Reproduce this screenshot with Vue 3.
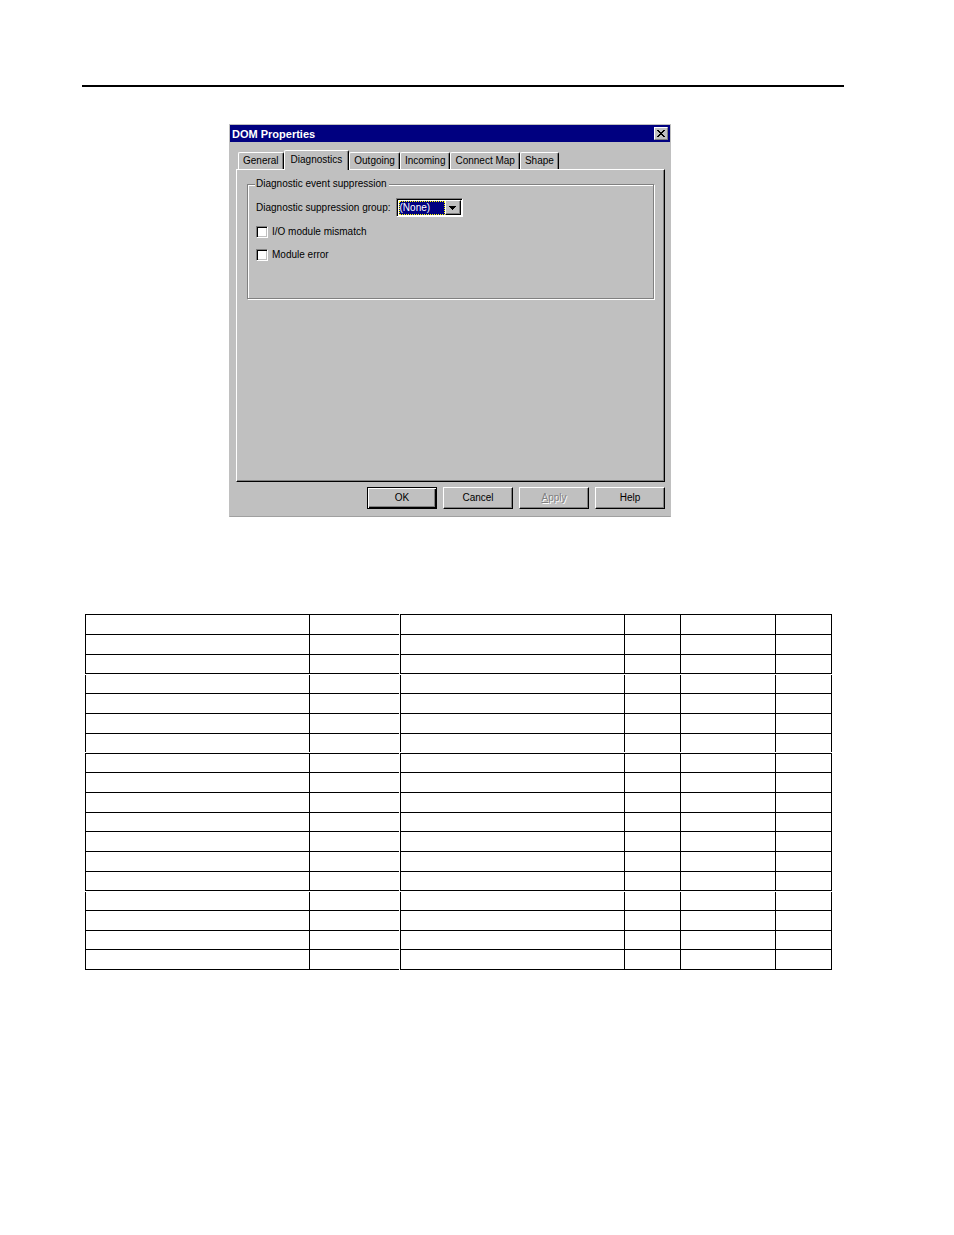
<script setup>
import { ref } from 'vue'

const tabs = ['General', 'Diagnostics', 'Outgoing', 'Incoming', 'Connect Map', 'Shape']
const active = ref('Diagnostics')
const group = ref('(None)')
const mismatch = ref(false)
const moduleError = ref(false)

const rows = Array.from({ length: 18 }, (_, i) => ({
  id: i,
  short: [2, 7, 10, 13, 16].includes(i),
  breakTop: i === 3 || i === 14,
  breakBottom: i === 6,
}))
</script>

<template>
  <main class="page">
    <hr class="rule" />
    <section class="dialog" role="dialog" aria-labelledby="dlg-title">
      <header class="titlebar">
        <h1 id="dlg-title">DOM Properties</h1>
        <button class="close" type="button" aria-label="Close">
          <svg width="8" height="7" viewBox="0 0 8 7" shape-rendering="crispEdges">
            <path d="M0 0h2v1h1v1h2v-1h1v-1h2v1h-1v1h-1v1h-1v1h1v1h1v1h1v1h-2v-1h-1v-1h-2v1h-1v1h-2v-1h1v-1h1v-1h1v-1h-1v-1h-1v-1h-1z" />
          </svg>
        </button>
      </header>
      <div class="body">
        <nav class="tabs" role="tablist">
          <button
            v-for="t in tabs"
            :key="t"
            type="button"
            role="tab"
            class="tab"
            :class="{ active: t === active }"
            :aria-selected="t === active"
            @click="active = t"
          >{{ t }}</button>
        </nav>
        <div class="panel">
          <fieldset class="group">
            <legend>Diagnostic event suppression</legend>
            <div class="line">
              <label for="grp">Diagnostic suppression group:</label>
              <span class="combo">
                <select id="grp" v-model="group"><option>(None)</option></select>
                <span class="arrow">
                  <svg width="7" height="4" viewBox="0 0 7 4" shape-rendering="crispEdges">
                    <path d="M0 0h7v1h-1v1h-1v1h-1v1h-1v-1h-1v-1h-1v-1h-1z" />
                  </svg>
                </span>
              </span>
            </div>
            <label class="check"><input v-model="mismatch" type="checkbox" />I/O module mismatch</label>
            <label class="check"><input v-model="moduleError" type="checkbox" />Module error</label>
          </fieldset>
        </div>
        <footer class="buttons">
          <button type="button" class="btn default">OK</button>
          <button type="button" class="btn">Cancel</button>
          <button type="button" class="btn" disabled><u>A</u>pply</button>
          <button type="button" class="btn">Help</button>
        </footer>
      </div>
    </section>

    <table class="grid">
      <colgroup>
        <col /><col class="c2" /><col /><col class="c4" /><col class="c5" /><col class="c6" />
      </colgroup>
      <tbody>
        <tr
          v-for="r in rows"
          :key="r.id"
          :class="{ short: r.short, 'break-top': r.breakTop, 'break-bottom': r.breakBottom }"
        >
          <td v-for="c in 6" :key="c"></td>
        </tr>
      </tbody>
    </table>
  </main>
</template>

<style>
body {
  margin: 0;
  background: #fff;
}
</style>

<style scoped>
.page {
  padding: 85px 110px 40px 82px;
  font: 10px/16px "Liberation Sans", Arial, sans-serif;
  color: #000;
}
.page * {
  box-sizing: border-box;
}
.rule {
  height: 2px;
  margin: 0;
  border: 0;
  background: #000;
}
button,
select {
  font: inherit;
  color: inherit;
  border-radius: 0;
}
.dialog {
  max-width: 442px;
  margin: 37px 0 0 147px;
  background: #c0c0c0;
  border: 1px solid #c0c0c0;
  border-bottom-color: #a0a0a0;
}
.titlebar {
  display: flex;
  align-items: center;
  justify-content: space-between;
  height: 17px;
  padding: 0 2px;
  background: #000080;
  color: #fff;
}
.titlebar h1 {
  margin: 0;
  font: bold 11px/18px "Liberation Sans", sans-serif;
}
.close {
  display: flex;
  align-items: center;
  justify-content: center;
  width: 14px;
  height: 13px;
  padding: 0;
  background: #c0c0c0;
  border: 1px solid;
  border-color: #fff #808080 #808080 #fff;
}
.body {
  padding: 8px 5px 7px 6px;
}
.tabs {
  display: flex;
  align-items: flex-end;
  padding-left: 2px;
  height: 19px;
}
.tab {
  flex: none;
  height: 17px;
  padding: 0 4px;
  background: #c0c0c0;
  border: 0 solid;
  border-width: 1px 1px 0 1px;
  border-color: #fff #000 #fff #fff;
  box-shadow: inset -1px 0 #808080;
  border-radius: 2px 2px 0 0;
  line-height: 16px;
  white-space: nowrap;
}
.tab.active {
  position: relative;
  height: 20px;
  padding: 0 6px 2px;
  margin-bottom: -1px;
}
.panel {
  height: 313px;
  padding: 6px 10px 0 10px;
  border: 1px solid;
  border-color: #fff #000 #000 #fff;
  box-shadow: inset -1px -1px #808080;
}
.group {
  height: 123px;
  margin: 0;
  min-width: 0;
  padding: 6px 8px;
  border: 1px solid #808080;
  box-shadow: 1px 1px #fff, inset 1px 1px #fff;
}
.group legend {
  padding: 0 2px 0 1px;
  margin-left: -1px;
  background: #c0c0c0;
}
.line {
  display: flex;
  align-items: center;
  gap: 5px;
}
.combo {
  display: flex;
  width: 67px;
  height: 19px;
  padding: 1px;
  background: #fff;
  border: 1px solid;
  border-color: #808080 #fff #fff #808080;
  box-shadow: inset 1px 1px #000;
}
.combo select {
  flex: 1;
  min-width: 0;
  margin: 1px 0 0 1px;
  padding: 0;
  appearance: none;
  background: #000080;
  color: #fff;
  border: 1px dotted #ffff00;
  outline: none;
  line-height: 12px;
}
.arrow {
  display: flex;
  align-items: center;
  justify-content: center;
  width: 16px;
  background: #c0c0c0;
  border: 1px solid;
  border-color: #fff #000 #000 #fff;
  box-shadow: inset -1px -1px #808080;
  pointer-events: none;
}
.check {
  display: flex;
  align-items: center;
  gap: 4px;
  margin-top: 7px;
  height: 16px;
}
.check input {
  width: 12px;
  height: 12px;
  margin: 0;
  appearance: none;
  background: #fff;
  border: 1px solid;
  border-color: #808080 #fff #fff #808080;
  box-shadow: inset 1px 1px #000, inset -1px -1px #c0c0c0;
}
.check input:checked {
  background: radial-gradient(#000 30%, #fff 35%);
}
.buttons {
  display: flex;
  justify-content: flex-end;
  gap: 6px;
  margin-top: 5px;
}
.btn {
  width: 70px;
  height: 22px;
  padding: 0;
  background: #c0c0c0;
  border: 1px solid;
  border-color: #fff #000 #000 #fff;
  box-shadow: inset -1px -1px #808080;
}
.btn.default {
  border-color: #000;
  box-shadow: inset 1px 1px #fff, inset -1px -1px #000, inset -2px -2px #808080;
}
.btn:disabled {
  color: #808080;
  text-shadow: 1px 1px #fff;
}
.grid {
  width: calc(100% - 15px);
  margin: 97px 0 0 3px;
  table-layout: fixed;
  border-collapse: separate;
  border-spacing: 0;
  border-top: 1px solid #000;
  border-right: 1px solid #000;
}
.c2 {
  width: 91px;
}
.c4 {
  width: 56px;
}
.c5 {
  width: 95px;
}
.c6 {
  width: 56px;
}
.grid td {
  position: relative;
  height: 20px;
  padding: 0;
  border-left: 1px solid #000;
  border-bottom: 1px solid #000;
}
.grid .short td {
  height: 19px;
}
.grid td:nth-child(2)::after {
  content: "";
  position: absolute;
  top: -1px;
  right: 0;
  bottom: -1px;
  width: 1px;
  background: #fff;
}
.break-top td::before,
.break-bottom td::before {
  content: "";
  position: absolute;
  left: -1px;
  right: -1px;
  height: 1px;
  background: #fff;
}
.break-top td::before {
  top: 0;
}
.break-bottom td::before {
  bottom: 0;
}
</style>
